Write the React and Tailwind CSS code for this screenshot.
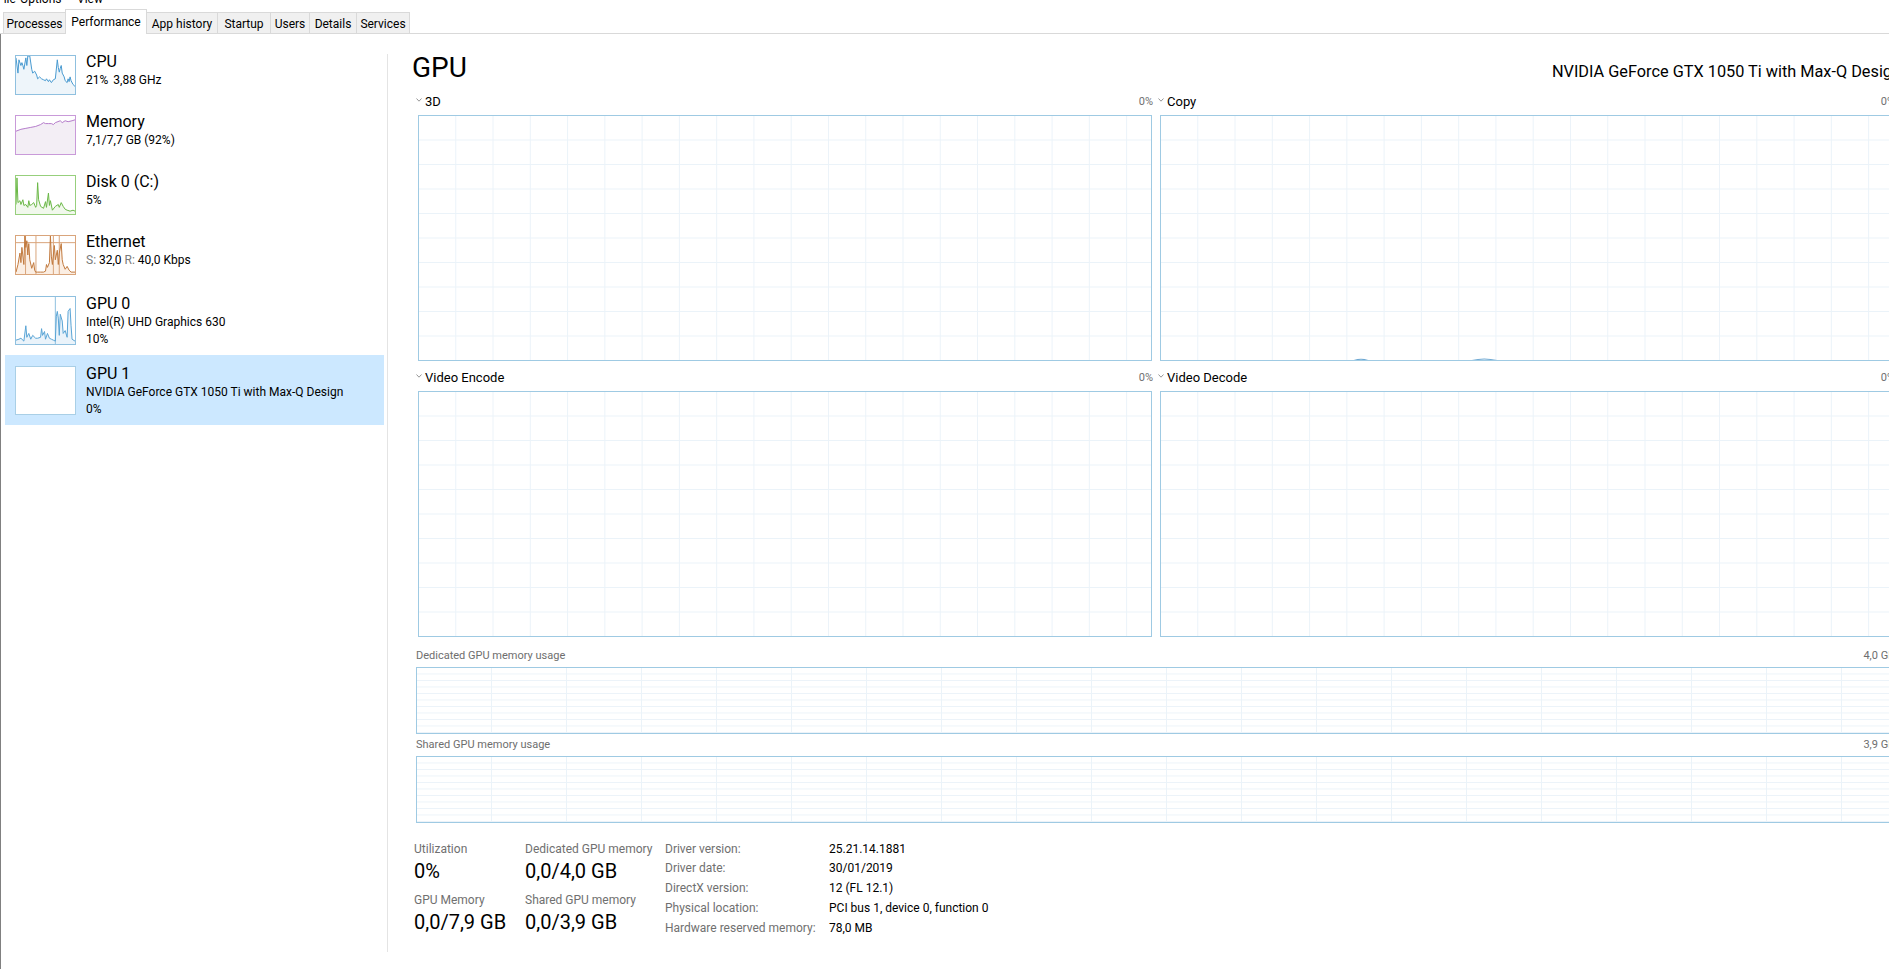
import React from 'react';

const cpuPts = [[0,2],[2,18],[3,4],[5,10],[6,7],[7,10],[8,14],[10,2],[11,10],[12,0],[14,0],[16,14],[17,18],[19,16],[21,20],[22,24],[24,22],[26,24],[28,25],[30,26],[31,24],[33,27],[34,25],[36,28],[38,25],[40,24],[42,4],[43,12],[44,17],[45,13],[46,10],[47,18],[49,22],[50,26],[52,28],[53,24],[54,27],[55,22],[56,26],[58,30],[60,32]];
const memPts = [[0,16],[5,14],[10,13],[15,12],[20,11],[25,9],[28,7],[30,8],[33,8],[36,8],[38,9],[40,7],[45,5],[47,7],[50,5],[53,6],[57,5],[60,4]];
const diskPts = [[0,30],[1,2],[2,28],[4,26],[5,30],[7,25],[8,31],[10,30],[12,33],[13,26],[14,31],[16,30],[18,28],[20,33],[21,31],[22,7],[23,25],[25,32],[28,34],[30,27],[31,33],[33,18],[34,31],[35,26],[37,36],[40,32],[43,30],[44,33],[46,28],[48,32],[50,35],[52,36],[55,37],[58,36],[60,37]];
const ethPts = [[0,38],[2,30],[4,18],[5,28],[6,12],[8,30],[9,0],[10,12],[11,5],[12,20],[13,8],[14,25],[16,34],[18,28],[19,36],[20,38],[22,38],[25,38],[28,38],[30,37],[31,30],[32,33],[34,28],[35,0],[36,22],[37,30],[38,20],[39,10],[40,25],[42,15],[43,30],[44,18],[46,8],[47,25],[48,30],[50,35],[52,32],[54,36],[56,38],[60,38]];
const gpu0Pts = [[0,45],[3,44],[5,43],[8,46],[10,30],[11,42],[13,38],[15,44],[17,40],[20,43],[22,43],[25,42],[26,33],[27,40],[29,36],[30,44],[32,38],[34,43],[36,44],[38,45],[40,46],[41,20],[42,15],[43,22],[44,40],[45,18],[47,25],[48,38],[50,35],[52,42],[53,15],[55,12],[56,30],[57,44],[60,46]];

function Spark({ h = 40, pts, line, fill, extra }) {
  const d = pts.map((p) => p.join(',')).join(' ');
  return (
    <svg viewBox={`0 0 60 ${h}`} preserveAspectRatio="none" className="block h-full w-full">
      <polygon points={`0,${h} ${d} 60,${h}`} fill={fill} />
      {extra}
      <polyline points={d} fill="none" stroke={line} strokeWidth="1" vectorEffect="non-scaling-stroke" />
    </svg>
  );
}

const items = [
  {
    title: 'CPU',
    lines: [<>21%<span className="ml-[5px]">3,88 GHz</span></>],
    border: 'border-[#8fc0df]',
    graph: <Spark pts={cpuPts} line="#4a9bd1" fill="#eef5fa" />,
  },
  {
    title: 'Memory',
    lines: ['7,1/7,7 GB (92%)'],
    border: 'border-[#c99ad9]',
    graph: <Spark pts={memPts} line="#b57ccb" fill="#f3eef5" />,
  },
  {
    title: 'Disk 0 (C:)',
    lines: ['5%'],
    border: 'border-[#97cf7c]',
    graph: <Spark pts={diskPts} line="#6bb847" fill="#f1f8ec" />,
  },
  {
    title: 'Ethernet',
    lines: [
      <>
        <span className="text-[#7a7a7a]">S:</span> 32,0 <span className="text-[#7a7a7a]">R:</span> 40,0 Kbps
      </>,
    ],
    border: 'border-[#d9a57c]',
    graph: (
      <Spark
        pts={ethPts}
        line="#c27a3e"
        fill="#fbeee3"
        extra={
          <g stroke="#d9a57c" strokeWidth="1">
            <line x1="9.7" y1="0" x2="9.7" y2="40" vectorEffect="non-scaling-stroke" />
            <line x1="20.3" y1="0" x2="20.3" y2="40" vectorEffect="non-scaling-stroke" />
            <line x1="38" y1="0" x2="38" y2="40" vectorEffect="non-scaling-stroke" />
            <line x1="44" y1="0" x2="44" y2="40" vectorEffect="non-scaling-stroke" />
            <line x1="0" y1="7" x2="60" y2="7" vectorEffect="non-scaling-stroke" />
          </g>
        }
      />
    ),
  },
  {
    title: 'GPU 0',
    lines: ['Intel(R) UHD Graphics 630', '10%'],
    border: 'border-[#8fc0df]',
    graph: (
      <Spark
        h={49}
        pts={gpu0Pts}
        line="#5aa5d6"
        fill="#eaf3fa"
        extra={<line x1="40" y1="0" x2="40" y2="49" stroke="#8fc0df" strokeWidth="1" vectorEffect="non-scaling-stroke" />}
      />
    ),
  },
  {
    title: 'GPU 1',
    lines: ['NVIDIA GeForce GTX 1050 Ti with Max-Q Design', '0%'],
    border: 'border-[#a9cfe6]',
    selected: true,
    graph: null,
  },
];

function SideItem({ item }) {
  const tall = item.lines.length > 1;
  return (
    <div className={`flex ${tall ? 'h-[70px]' : 'h-[60px]'} ${item.selected ? 'bg-[#cce8ff]' : ''}`}>
      <div className={`ml-[10px] w-[61px] shrink-0 border bg-white ${tall ? 'mt-[11px] h-[49px]' : 'mt-[10px] h-[40px]'} ${item.border}`}>
        {item.graph}
      </div>
      <div className={`ml-[10px] whitespace-nowrap ${tall ? 'mt-[9px]' : 'mt-[7px]'}`}>
        <div className="text-[16px] leading-[20px]">{item.title}</div>
        {item.lines.map((l, i) => (
          <div key={i} className="text-[12px] leading-[16.5px]">
            {l}
          </div>
        ))}
      </div>
    </div>
  );
}

function Chevron() {
  return (
    <svg width="6" height="4" viewBox="0 0 6 4" className="mt-[4px] shrink-0">
      <polyline points="0.5,0.5 3,3.2 5.5,0.5" fill="none" stroke="#8a8a8a" strokeWidth="0.9" />
    </svg>
  );
}

function Grid({ id, cw, rh, className, bumps }) {
  return (
    <div className={`border border-[#9fcae3] bg-white ${className}`}>
      <svg className="block h-full w-full" shapeRendering="crispEdges">
        <defs>
          <pattern id={id} x={cw - 1} y={rh - 1} width={cw} height={rh} patternUnits="userSpaceOnUse">
            <rect x="0" y="0" width="1" height={rh} fill="#ebf3f9" />
            <rect x="0" y="0" width={cw} height="1" fill="#ebf3f9" />
          </pattern>
        </defs>
        <rect x="0" y="0" width="100%" height="100%" fill={`url(#${id})`} />
        {bumps}
      </svg>
    </div>
  );
}

const graphs = [
  { id: 'g3d', name: '3D' },
  {
    id: 'gcopy',
    name: 'Copy',
    bumps: (
      <g fill="none" stroke="#6fa9d3" strokeWidth="1.2" shapeRendering="auto">
        <path d="M193 244.5 Q200 242 207 244.5" />
        <path d="M311 244.5 Q323 241.5 336 244.5" />
      </g>
    ),
  },
  { id: 'genc', name: 'Video Encode' },
  { id: 'gdec', name: 'Video Decode' },
];

const tabs = [
  { label: 'Processes', w: 'w-[63px]' },
  { label: 'Performance', w: 'w-[82px]', active: true },
  { label: 'App history', w: 'w-[71px]' },
  { label: 'Startup', w: 'w-[53px]' },
  { label: 'Users', w: 'w-[39px]' },
  { label: 'Details', w: 'w-[47px]' },
  { label: 'Services', w: 'w-[53px]' },
];

const driver = [
  ['Driver version:', '25.21.14.1881'],
  ['Driver date:', '30/01/2019'],
  ['DirectX version:', '12 (FL 12.1)'],
  ['Physical location:', 'PCI bus 1, device 0, function 0'],
  ['Hardware reserved memory:', '78,0 MB'],
];

export default function App() {
  return (
    <div className="h-[969px] w-[1889px] overflow-hidden bg-white font-['Roboto','Liberation_Sans',sans-serif] text-black">
      {/* menu bar, only the bottom edge shows */}
      <div className="h-[9px] overflow-hidden">
        <div className="-mt-[9px] flex whitespace-nowrap text-[12px] leading-[16px]">
          <span className="-ml-[3px] w-[23px]">File</span>
          <span className="w-[57px]">Options</span>
          <span>View</span>
        </div>
      </div>

      {/* tabs */}
      <div className="flex h-[25px] items-end border-b border-[#d9d9d9] pl-[3px] text-[12px] leading-[16px]">
        {tabs.map((t, i) =>
          t.active ? (
            <div
              key={t.label}
              className={`-mb-px -ml-px h-[25px] ${t.w} border-x border-t border-[#d9d9d9] bg-white pt-[4px] text-center`}
            >
              {t.label}
            </div>
          ) : (
            <div
              key={t.label}
              className={`h-[21px] ${t.w} border-t border-r border-[#d9d9d9] bg-[#f0f0f0] pt-[3px] text-center ${i === 0 ? 'border-l' : ''}`}
            >
              {t.label}
            </div>
          )
        )}
      </div>

      <div className="flex h-[935px] border-l border-[#808080]">
        {/* sidebar */}
        <div className="w-[386px] shrink-0 pl-[4px] pr-[3px] pt-[11px]">
          {items.map((it) => (
            <SideItem key={it.title} item={it} />
          ))}
        </div>
        <div className="mt-[20px] h-[898px] w-px shrink-0 bg-[#e4e4e4]" />

        {/* main panel */}
        <div className="min-w-0 flex-1 overflow-hidden">
          <div className="ml-[26px] w-[1481px] pt-[18px]">
            <div className="flex h-[32px] items-baseline justify-between whitespace-nowrap">
              <span className="-ml-[2px] text-[28px] leading-[32px]">GPU</span>
              <span className="-mr-[6px] text-[16.3px]">NVIDIA GeForce GTX 1050 Ti with Max-Q Design</span>
            </div>

            <div className="mt-[10px] ml-[2px] grid grid-cols-[737px_737px] gap-x-[5px] gap-y-[9px]">
              {graphs.map((g) => (
                <div key={g.id}>
                  <div className="flex h-[16px] items-start justify-between">
                    <div className="flex items-start">
                      <Chevron />
                      <span className="ml-[3px] text-[13px] leading-[16px]">{g.name}</span>
                    </div>
                    <span className="text-[11px] leading-[16px] text-[#707070]">0%</span>
                  </div>
                  <Grid id={g.id} cw={37.27} rh={24.5} bumps={g.bumps} className="mt-[5px] ml-[2px] h-[246px] w-[734px]" />
                </div>
              ))}
            </div>

            <div className="ml-[2px] mt-[11.5px]">
              <div className="flex h-[14px] justify-between text-[11px] leading-[14px] text-[#6e6e6e]">
                <span>Dedicated GPU memory usage</span>
                <span>4,0 GB</span>
              </div>
              <Grid id="gded" cw={75} rh={6.5} className="mt-[4px] h-[67px] w-full" />
              <div className="mt-[4px] flex h-[14px] justify-between text-[11px] leading-[14px] text-[#6e6e6e]">
                <span>Shared GPU memory usage</span>
                <span>3,9 GB</span>
              </div>
              <Grid id="gshr" cw={75} rh={6.5} className="mt-[4px] h-[67px] w-full" />
            </div>

            <div className="mt-[17px] flex whitespace-nowrap text-[12px]">
              <div className="w-[111px] pt-[1px]">
                <div className="leading-[16px] text-[#707070]">Utilization</div>
                <div className="mt-[1px] text-[20px] leading-[26px]">0%</div>
                <div className="mt-[8px] leading-[16px] text-[#707070]">GPU Memory</div>
                <div className="mt-[1px] text-[20px] leading-[26px]">0,0/7,9 GB</div>
              </div>
              <div className="w-[140px] pt-[1px]">
                <div className="leading-[16px] text-[#707070]">Dedicated GPU memory</div>
                <div className="mt-[1px] text-[20px] leading-[26px]">0,0/4,0 GB</div>
                <div className="mt-[8px] leading-[16px] text-[#707070]">Shared GPU memory</div>
                <div className="mt-[1px] text-[20px] leading-[26px]">0,0/3,9 GB</div>
              </div>
              <div className="grid grid-cols-[164px_auto] leading-[19.75px]">
                {driver.map(([k, v]) => (
                  <React.Fragment key={k}>
                    <span className="text-[#707070]">{k}</span>
                    <span>{v}</span>
                  </React.Fragment>
                ))}
              </div>
            </div>
          </div>
        </div>
      </div>
    </div>
  );
}
